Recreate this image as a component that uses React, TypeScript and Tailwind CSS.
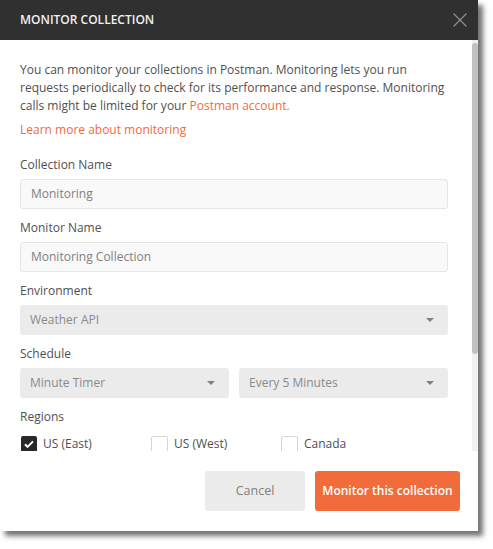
import { X } from 'lucide-react'

function Field({ label, value }: { label: string; value: string }) {
  return (
    <div className="mb-[10px]">
      <div className="mb-[5px] text-[12px] leading-[18px] text-[#505050]">{label}</div>
      <div className="flex h-[30px] items-center rounded-[3px] border border-[#e6e6e6] bg-[#f9f9f9] px-[10px] text-[12px] text-[#808080]">
        {value}
      </div>
    </div>
  )
}

function Select({ value }: { value: string }) {
  return (
    <div className="flex h-[30px] items-center justify-between rounded-[3px] bg-[#ebebeb] pl-[10px] pr-[14px] text-[12px] text-[#8a8a8a]">
      <span>{value}</span>
      <span className="h-0 w-0 border-x-[4px] border-t-[4px] border-x-transparent border-t-[#808080]" />
    </div>
  )
}

function Region({ label, checked }: { label: string; checked?: boolean }) {
  return (
    <div className="flex items-start gap-[6px]">
      {checked ? (
        <span className="flex h-[16px] w-[16px] items-center justify-center rounded-[2px] bg-[#282828]">
          <svg width="12" height="12" viewBox="0 0 12 12">
            <path d="M2 6.3l2.6 2.6L10 3.4" fill="none" stroke="#fff" strokeWidth="2" />
          </svg>
        </span>
      ) : (
        <span className="h-[17px] w-[17px] rounded-[2px] border border-[#d6d6d6] bg-white" />
      )}
      <span className="text-[12px] leading-[16px] text-[#505050]">{label}</span>
    </div>
  )
}

export default function App() {
  return (
    <div className="min-h-screen bg-white font-['Open_Sans',sans-serif]">
      <div className="flex h-[531px] w-[478px] flex-col bg-white shadow-[5px_5px_5px_rgba(0,0,0,0.55)]">
        <div className="flex h-10 shrink-0 items-center justify-between bg-[#303030] pl-5 pr-[6px]">
          <h1 className="text-[12px] font-semibold text-[#f0f0f0]">MONITOR COLLECTION</h1>
          <X size={24} strokeWidth={1.3} className="text-[#8c8c8c]" />
        </div>

        <div className="flex min-h-0 flex-1">
          <div className="flex-1 overflow-hidden pl-5 pr-[24px] pt-[21px]">
            <p className="text-[12px] leading-[18px] text-[#505050]">
              You can monitor your collections in Postman. Monitoring lets you run requests periodically to check
              for its performance and response. Monitoring calls might be limited for your{' '}
              <span className="text-[#f26b3a]">Postman account.</span>
            </p>
            <div className="mt-[6px] mb-[17px] text-[12px] leading-[18px] text-[#f26b3a]">
              Learn more about monitoring
            </div>

            <Field label="Collection Name" value="Monitoring" />
            <Field label="Monitor Name" value="Monitoring Collection" />

            <div className="mb-[10px]">
              <div className="mb-[5px] text-[12px] leading-[18px] text-[#505050]">Environment</div>
              <Select value="Weather API" />
            </div>

            <div className="mb-[10px]">
              <div className="mb-[5px] text-[12px] leading-[18px] text-[#505050]">Schedule</div>
              <div className="grid grid-cols-2 gap-[10px]">
                <Select value="Minute Timer" />
                <Select value="Every 5 Minutes" />
              </div>
            </div>

            <div className="mb-[10px] text-[12px] leading-[18px] text-[#505050]">Regions</div>
            <div className="grid grid-cols-[130px_130px_130px] pl-px">
              <Region label="US (East)" checked />
              <Region label="US (West)" />
              <Region label="Canada" />
            </div>
          </div>

          <div className="w-[6px] bg-[#f1f1f1] pt-[3px]">
            <div className="h-[311px] rounded-[3px] bg-[#c1c1c1]" />
          </div>
        </div>

        <div className="flex shrink-0 justify-end gap-[10px] pb-5 pl-5 pr-[18px] pt-5">
          <button className="h-10 w-[100px] rounded-[3px] bg-[#ebebeb] text-[12.5px] text-[#808080]">Cancel</button>
          <button className="h-10 w-[145px] rounded-[3px] bg-[#f26b3a] text-[12px] font-semibold text-white">
            Monitor this collection
          </button>
        </div>
      </div>
    </div>
  )
}
